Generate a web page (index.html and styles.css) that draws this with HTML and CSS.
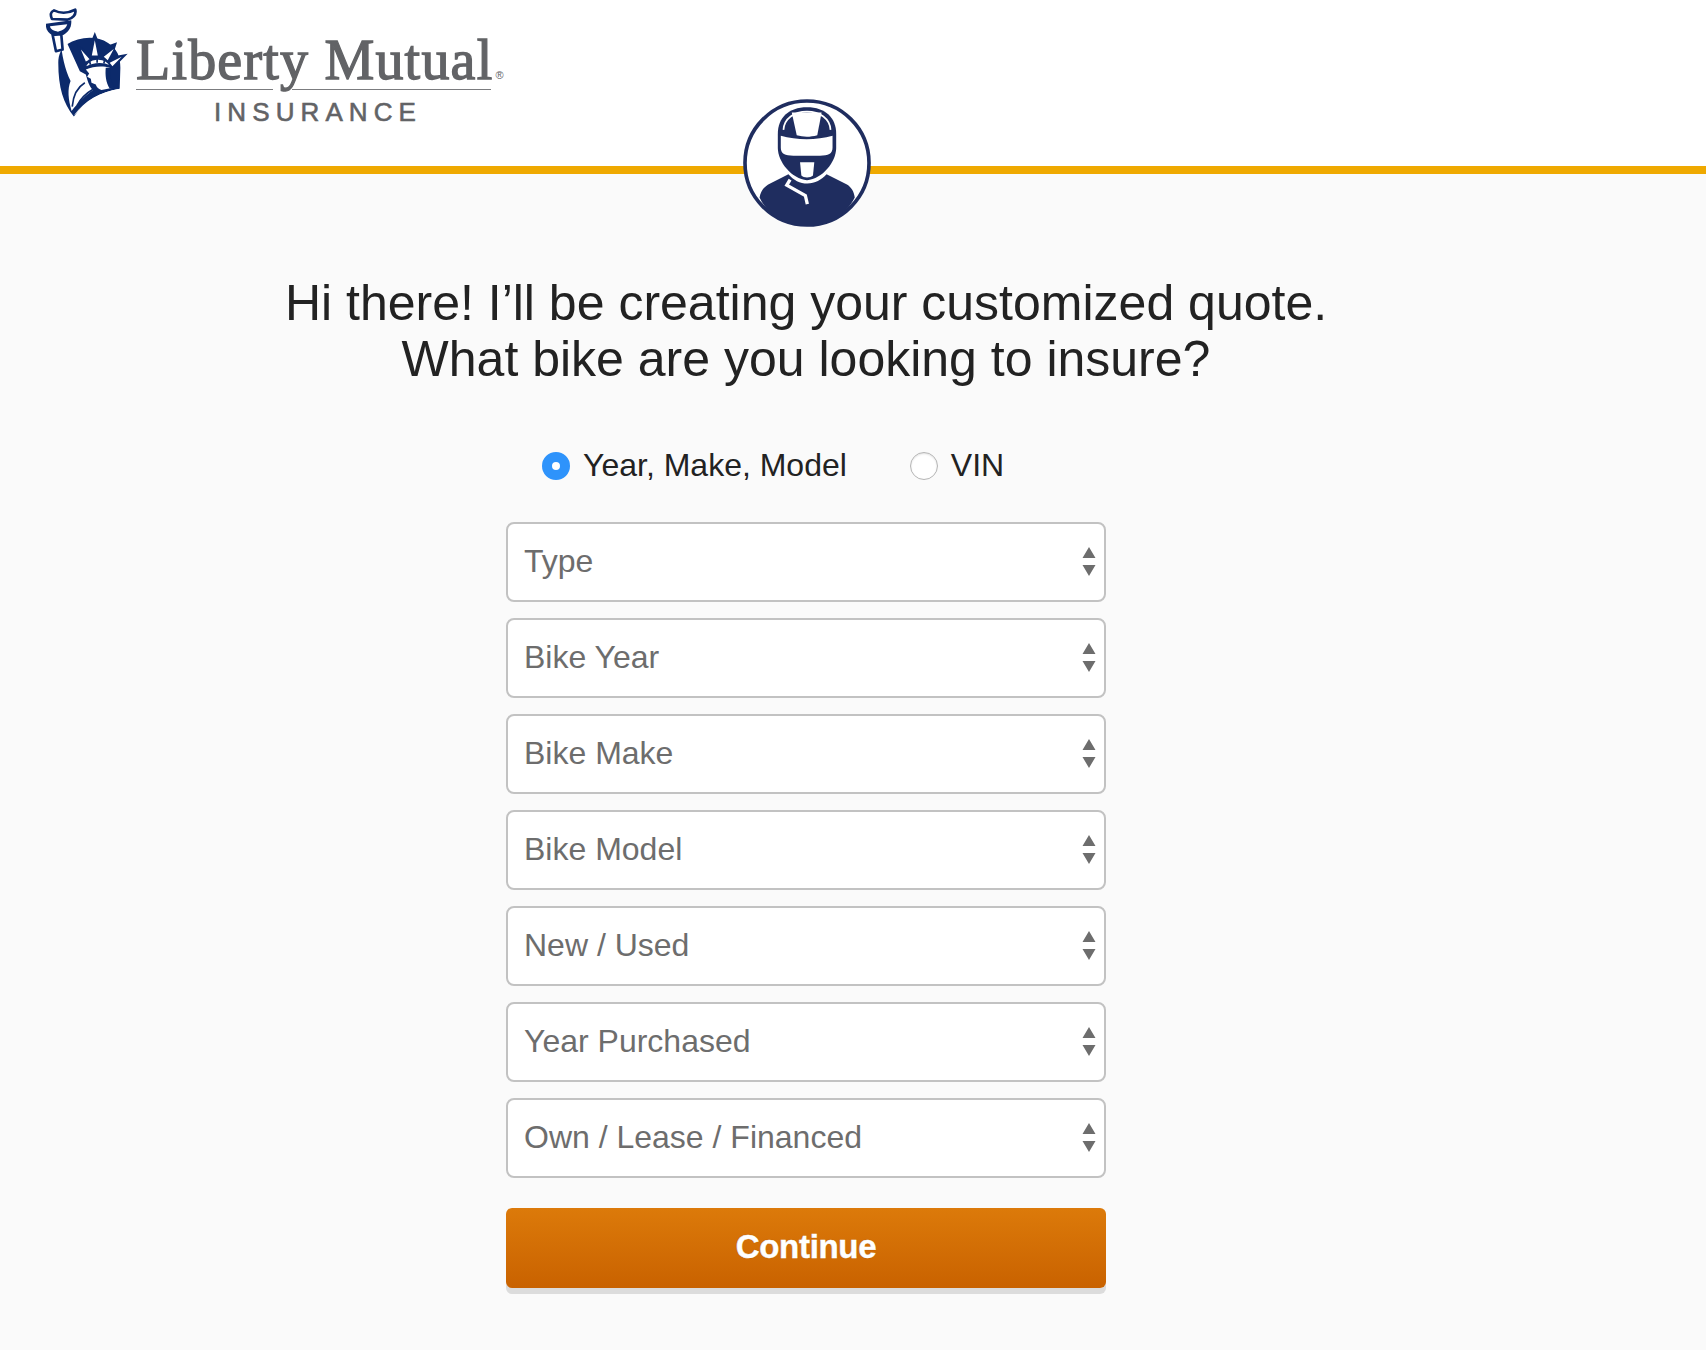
FILE: index.html
```html
<!DOCTYPE html>
<html lang="en">
<head>
<meta charset="utf-8">
<title>Liberty Mutual Insurance</title>
<link rel="stylesheet" href="styles.css">
</head>
<body>
<header class="site-header">
  <a class="logo" href="#">
    <svg class="logo-mark" viewBox="48 25 247 328" aria-hidden="true">
      <path class="navy" d="M110 135C150 110 200 108 235 130C262 148 272 170 272 205L270 268C210 278 165 305 132 352C100 312 85 265 85 190C85 165 95 145 110 135Z"/>
      <path class="navy" d="M195 97L210 135L180 135ZM140 135L165 150L150 160ZM262 128L250 165L228 140ZM294 163L262 195L252 170Z"/>
      <path class="white" d="M195 122L204 168L186 168ZM153 150L180 180L168 186ZM252 148L234 182L222 172ZM276 172L248 200L240 190Z"/>
      <path class="white" d="M92 120L106 118L150 215L168 225C172 240 178 262 190 272C170 285 145 310 125 335C115 300 112 270 122 245C105 210 95 165 92 120Z"/>
      <path class="logo-fold" d="M127 322C130 285 145 262 165 250M142 318C152 298 168 282 192 268"/>
      <path class="white" d="M136 345C170 305 215 284 270 274L270 268C212 278 166 302 132 348Z"/>
      <path class="white" d="M168 210C190 200 220 198 240 205C238 225 240 250 250 265L215 272C205 268 200 262 198 255L185 250L183 238L172 232L178 222Z"/>
      <path class="logo-crown" d="M166 205C172 172 228 168 242 200C218 190 190 192 166 205Z"/>
      <path class="logo-fold" d="M182 196L178 180M202 190L202 174M222 192L226 178"/>
      <path class="navy" d="M228 205L243 205C240 228 243 250 256 265L240 268C228 250 226 225 228 205Z"/>
      <path class="logo-torch" d="M66 58C60 45 62 36 72 32C88 40 112 42 136 30C140 45 128 56 112 60Z"/>
      <path class="navy" d="M48 72L124 62C126 84 114 98 100 106L68 108C54 100 46 88 48 72Z"/>
      <path class="white" d="M60 80L112 74C108 86 100 92 84 96C72 94 62 90 60 80Z"/>
      <path class="logo-torch" d="M68 106L94 104L98 150L78 155Z"/>
    </svg>
    <span class="logo-type">
      <span class="logo-name">Liberty Mutual<sup class="logo-reg">®</sup></span>
      <span class="logo-rule"><span class="logo-rule-left"></span><span class="logo-rule-right"></span></span>
      <span class="logo-sub">INSURANCE</span>
    </span>
  </a>
  <svg class="avatar" viewBox="68 25 386 386" aria-hidden="true">
    <circle class="avatar-ring" cx="261" cy="218" r="187"/>
    <path class="avatar-dark" d="M118 322C122 298 135 288 150 280L205 252C220 270 240 280 262 280C285 280 305 268 320 252L380 282C395 290 403 305 405 322C378 375 325 408 261 408C197 408 142 375 118 322Z"/>
    <path class="avatar-line" d="M210 268L200 285L256 316L262 342"/>
    <path class="avatar-shell" d="M261 50C205 50 173 82 173 130V172C173 215 215 266 261 270C307 266 349 215 349 172V130C349 82 317 50 261 50Z"/>
    <path class="avatar-gap" d="M190 118C192 84 222 63 261 63C300 63 330 84 332 118"/>
    <path class="avatar-white" d="M215 66H305L292 134C270 140 250 140 230 134Z"/>
    <path class="avatar-white" d="M182 136C230 150 290 150 338 136V172C338 190 325 196 300 196H220C195 196 182 190 182 172Z"/>
    <path class="avatar-white" d="M240 216H283L279 256C272 264 250 264 244 256Z"/>
  </svg>
</header>
<main class="quote">
  <h1 class="quote-title">Hi there! I’ll be creating your customized quote.<br>What bike are you looking to insure?</h1>
  <form class="quote-form">
    <div class="radio-row">
      <label class="radio"><input type="radio" name="lookup" checked><span>Year, Make, Model</span></label>
      <label class="radio"><input type="radio" name="lookup"><span>VIN</span></label>
    </div>
    <div class="field"><select><option>Type</option></select><svg class="arrows" viewBox="0 0 13 29"><path d="M6.5 0L13 11H0ZM0 18H13L6.5 29Z"/></svg></div>
    <div class="field"><select><option>Bike Year</option></select><svg class="arrows" viewBox="0 0 13 29"><path d="M6.5 0L13 11H0ZM0 18H13L6.5 29Z"/></svg></div>
    <div class="field"><select><option>Bike Make</option></select><svg class="arrows" viewBox="0 0 13 29"><path d="M6.5 0L13 11H0ZM0 18H13L6.5 29Z"/></svg></div>
    <div class="field"><select><option>Bike Model</option></select><svg class="arrows" viewBox="0 0 13 29"><path d="M6.5 0L13 11H0ZM0 18H13L6.5 29Z"/></svg></div>
    <div class="field"><select><option>New / Used</option></select><svg class="arrows" viewBox="0 0 13 29"><path d="M6.5 0L13 11H0ZM0 18H13L6.5 29Z"/></svg></div>
    <div class="field"><select><option>Year Purchased</option></select><svg class="arrows" viewBox="0 0 13 29"><path d="M6.5 0L13 11H0ZM0 18H13L6.5 29Z"/></svg></div>
    <div class="field"><select><option>Own / Lease / Financed</option></select><svg class="arrows" viewBox="0 0 13 29"><path d="M6.5 0L13 11H0ZM0 18H13L6.5 29Z"/></svg></div>
    <button class="continue" type="button">Continue</button>
  </form>
</main>
</body>
</html>
```

FILE: styles.css
```css
* { box-sizing: border-box; }
html, body { margin: 0; padding: 0; }
body {
  min-height: 1350px;
  background: #fafafa;
  font-family: "Liberation Sans", Arial, sans-serif;
  color: #222;
  overflow: hidden;
}
.site-header {
  position: relative;
  height: 174px;
  background: #fff;
  border-bottom: 8px solid #efa900;
  padding: 8px 0 0 46px;
}
.logo { display: flex; align-items: flex-start; text-decoration: none; color: #626366; }
.logo-mark { width: 82px; height: 109px; flex: none; }
.navy { fill: #0c2a6b; }
.white { fill: #fff; }
.logo-fold { fill: none; stroke: #0c2a6b; stroke-width: 5; }
.logo-crown { fill: #fff; stroke: #0c2a6b; stroke-width: 5; }
.logo-torch { fill: #fff; stroke: #0c2a6b; stroke-width: 8; stroke-linejoin: round; }
.logo-type { display: flex; flex-direction: column; margin: 24px 0 0 8px; width: 370px; }
.logo-name {
  font-family: "Liberation Serif", "Times New Roman", serif;
  font-weight: 400;
  font-size: 56px;
  line-height: 56px;
  letter-spacing: 1.2px;
  -webkit-text-stroke: 1.3px #626366;
  white-space: nowrap;
}
.logo-reg { font-size: 11px; font-family: "Liberation Sans", Arial, sans-serif; font-weight: 400; letter-spacing: 0; -webkit-text-stroke: 0; vertical-align: baseline; margin-left: 2px; }
.logo-rule { display: flex; gap: 19px; margin-top: -14px; }
.logo-rule-left, .logo-rule-right { display: block; height: 1px; background: #7b7c7f; }
.logo-rule-left { width: 137px; }
.logo-rule-right { width: 199px; }
.logo-sub {
  font-size: 26px;
  line-height: 30px;
  font-weight: 400;
  letter-spacing: 6.1px;
  margin: 7px 0 0 78px;
  -webkit-text-stroke: 0.6px #626366;
}
.avatar { position: absolute; left: 743px; top: 99px; width: 128px; height: 128px; }
.avatar-ring { fill: #fff; stroke: #1f2d5f; stroke-width: 11; }
.avatar-dark, .avatar-shell { fill: #1f2d5f; }
.avatar-white { fill: #fff; }
.avatar-gap { fill: none; stroke: #fff; stroke-width: 5; }
.avatar-line { fill: none; stroke: #fff; stroke-width: 10; }
.quote { width: 1612px; display: flex; flex-direction: column; align-items: center; }
.quote-title {
  margin: 101px 0 0;
  font-size: 50px;
  line-height: 56px;
  font-weight: 400;
  text-align: center;
  color: #222;
}
.quote-form { width: 600px; display: flex; flex-direction: column; gap: 16px; margin-top: 61px; }
.radio-row { display: flex; gap: 63px; height: 36px; align-items: center; padding-left: 36px; margin-bottom: 22px; }
.radio { display: flex; align-items: center; gap: 13px; font-size: 32px; color: #222; }
.radio span { position: relative; top: -1px; }
.radio input {
  appearance: none;
  margin: 0;
  width: 28px;
  height: 28px;
  border-radius: 50%;
  background: #fff;
  border: 1px solid #b5b5b5;
  box-shadow: inset 0 1px 2px rgba(0,0,0,.12);
}
.radio input:checked {
  border: 10px solid #2e93fb;
  box-shadow: none;
}
.field { position: relative; height: 80px; }
.field select {
  appearance: none;
  width: 100%;
  height: 100%;
  border: 2px solid #c2c2c2;
  border-radius: 8px;
  background: #fff;
  padding: 0 60px 2px 16px;
  font-family: inherit;
  font-size: 32px;
  color: #6d6d6d;
}
.arrows { position: absolute; right: 10px; top: 25px; width: 14px; height: 29px; fill: #6d6d6d; pointer-events: none; }
.continue {
  height: 80px;
  margin-top: 14px;
  padding: 0 0 2px;
  border: 0;
  border-radius: 6px;
  background: linear-gradient(#dc7a0a, #c96200);
  box-shadow: 0 6px 0 #dcdcdc;
  color: #fff;
  font-family: inherit;
  font-weight: 700;
  font-size: 33px;
  letter-spacing: -0.3px;
  -webkit-text-stroke: 0.5px #fff;
  text-shadow: 0 0 1px #7a3c00;
}
```
